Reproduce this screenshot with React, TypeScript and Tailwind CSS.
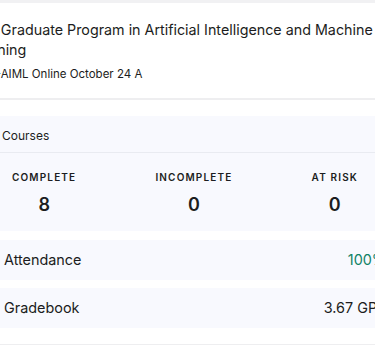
export default function App() {
  const stats = [
    { label: "COMPLETE", value: 8 },
    { label: "INCOMPLETE", value: 0 },
    { label: "AT RISK", value: 0 },
  ];

  return (
    <div
      className="h-[345px] w-[375px] overflow-hidden bg-white text-[#1c1d21]"
      style={{ fontFamily: "Inter, 'Noto Sans', sans-serif" }}
    >
      <div className="h-[3px] bg-[#f1f1f3]" />

      {/* Program header */}
      <div className="h-[95px] pt-[17px]">
        <h1 className="-ml-[33px] w-[440px] text-[14.3px] leading-[20px] font-normal">
          Post Graduate Program in Artificial Intelligence and Machine Learning
        </h1>
        <p className="-ml-[27px] mt-[6px] text-[11.5px] leading-[16px]">PGP-AIML Online October 24 A</p>
      </div>
      <div className="h-[2px] bg-[#eeeef0]" />

      {/* Courses summary */}
      <div className="mt-[16px] h-[115px] bg-[#f8f9fe]">
        <div className="h-[37px] border-b border-[#e9ebf1] pl-[2px] pt-[12px] text-[12px] leading-[16px]">
          Courses
        </div>
        <div className="flex justify-between pl-[12px] pr-[17px] pt-[18px]">
          {stats.map((s) => (
            <div key={s.label} className="flex flex-col items-center">
              <span className="text-[10px] leading-[12px] font-semibold tracking-[0.115em]">{s.label}</span>
              <span className="mt-[11px] text-[18px] leading-[22px] font-semibold">{s.value}</span>
            </div>
          ))}
        </div>
      </div>

      {/* Metrics */}
      <div className="mt-[9px] -mr-[11px] flex h-[40px] items-center justify-between bg-[#f8f9fe] pl-[4px]">
        <span className="text-[14.4px]">Attendance</span>
        <span className="text-[14.4px] text-[#118266]">100%</span>
      </div>
      <div className="mt-[8px] -mr-[11px] flex h-[40px] items-center justify-between bg-[#f8f9fe] pl-[4px]">
        <span className="text-[14.4px]">Gradebook</span>
        <span className="text-[14.4px]">3.67 GPA</span>
      </div>
      <div className="mt-[16px] h-[2px] bg-[#eeeef0]" />
    </div>
  );
}
